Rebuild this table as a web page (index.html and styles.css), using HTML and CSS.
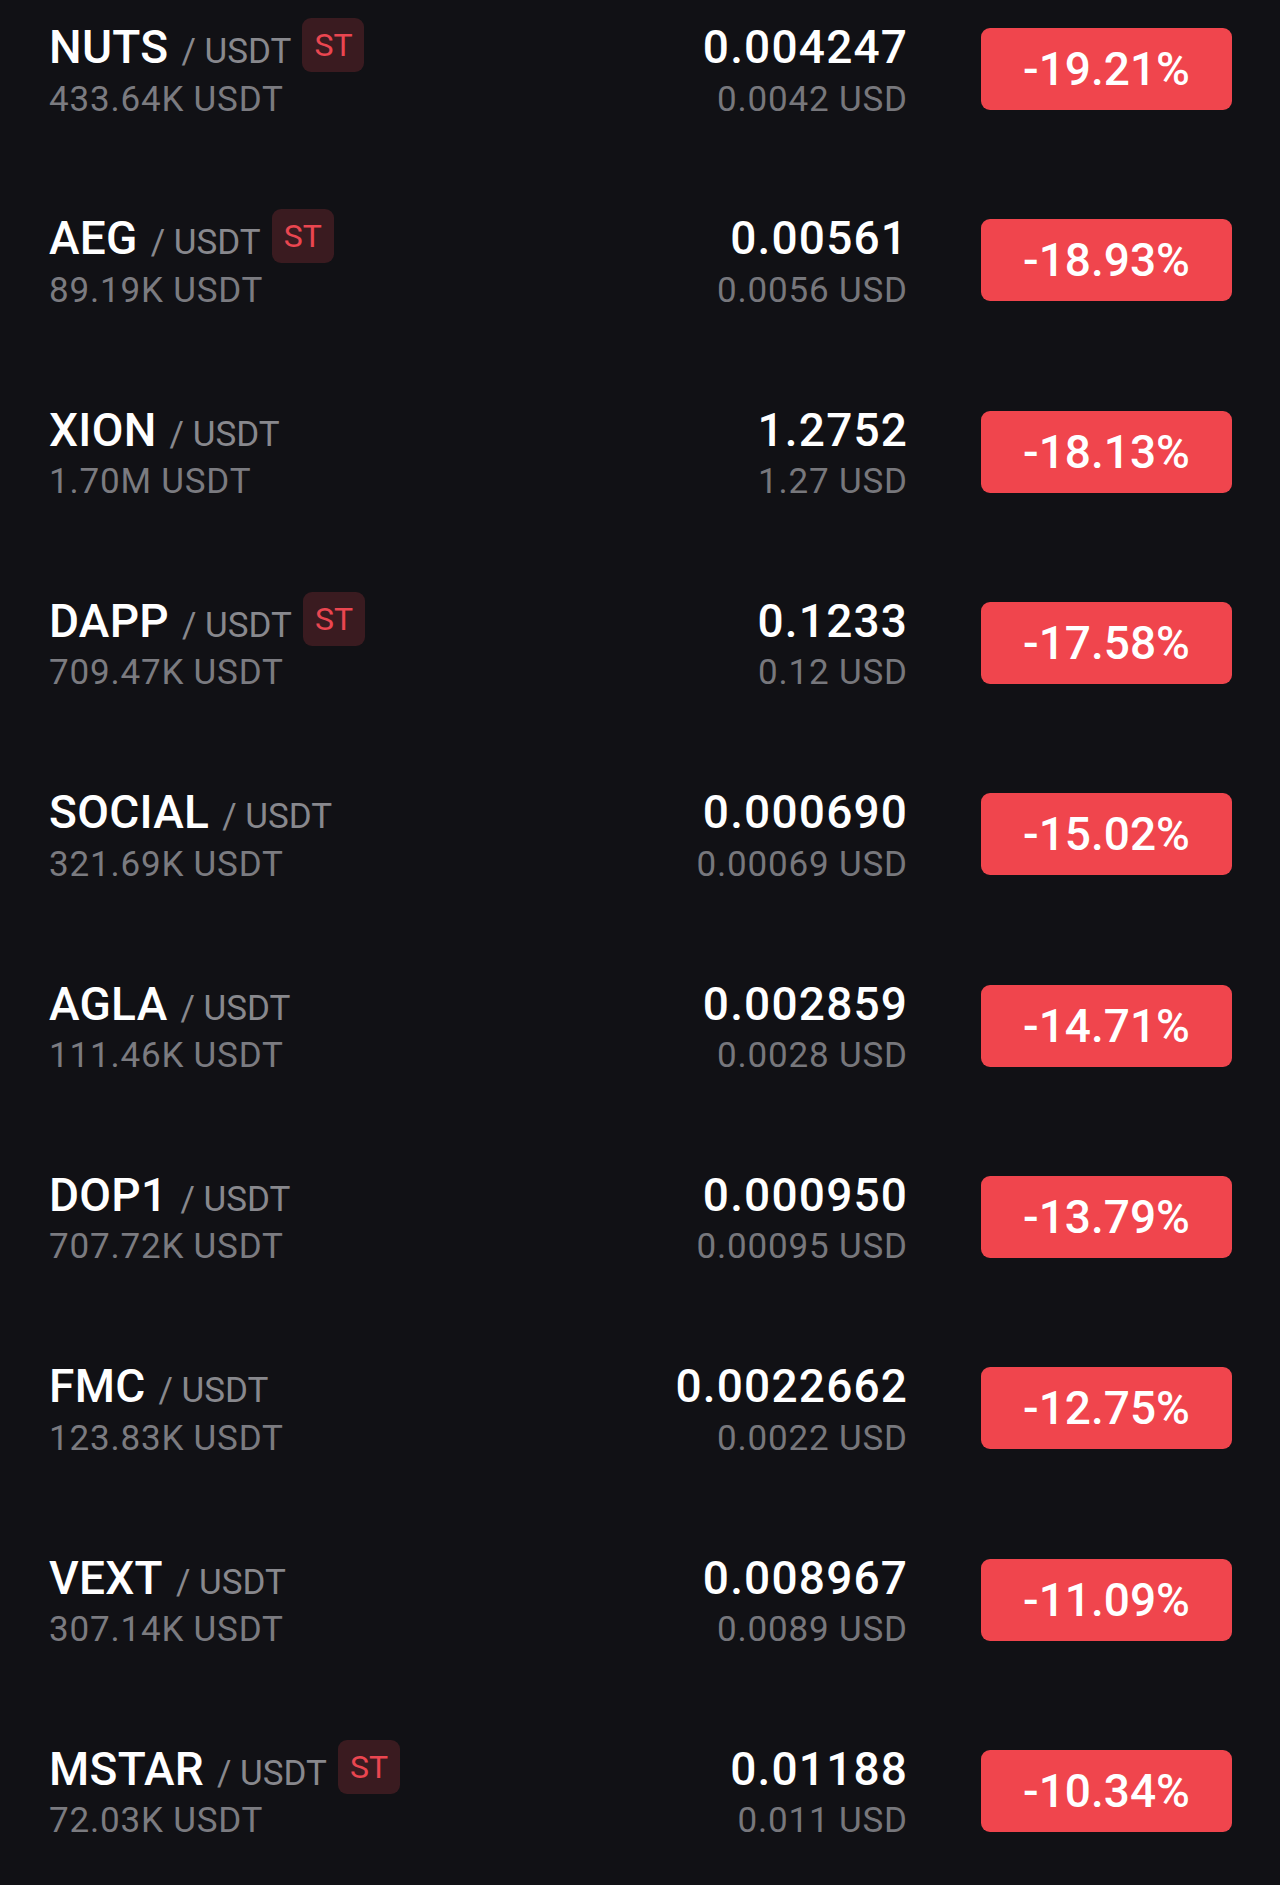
FILE: index.html
```html
<!DOCTYPE html>
<html lang="en">
<head>
<meta charset="utf-8">
<title>Top Losers</title>
<link rel="stylesheet" href="styles.css">
</head>
<body>
<div class="list">
  <div class="row">
    <div class="left">
      <div class="name-line"><span class="name">NUTS</span><span class="pair">/ USDT</span><span class="tag">ST</span></div>
      <div class="vol">433.64K USDT</div>
    </div>
    <div class="price-col">
      <div class="price">0.004247</div>
      <div class="usd">0.0042 USD</div>
    </div>
    <div class="chg">-19.21%</div>
  </div>
  <div class="row">
    <div class="left">
      <div class="name-line"><span class="name">AEG</span><span class="pair">/ USDT</span><span class="tag">ST</span></div>
      <div class="vol">89.19K USDT</div>
    </div>
    <div class="price-col">
      <div class="price">0.00561</div>
      <div class="usd">0.0056 USD</div>
    </div>
    <div class="chg">-18.93%</div>
  </div>
  <div class="row">
    <div class="left">
      <div class="name-line"><span class="name">XION</span><span class="pair">/ USDT</span></div>
      <div class="vol">1.70M USDT</div>
    </div>
    <div class="price-col">
      <div class="price">1.2752</div>
      <div class="usd">1.27 USD</div>
    </div>
    <div class="chg">-18.13%</div>
  </div>
  <div class="row">
    <div class="left">
      <div class="name-line"><span class="name">DAPP</span><span class="pair">/ USDT</span><span class="tag">ST</span></div>
      <div class="vol">709.47K USDT</div>
    </div>
    <div class="price-col">
      <div class="price">0.1233</div>
      <div class="usd">0.12 USD</div>
    </div>
    <div class="chg">-17.58%</div>
  </div>
  <div class="row">
    <div class="left">
      <div class="name-line"><span class="name">SOCIAL</span><span class="pair">/ USDT</span></div>
      <div class="vol">321.69K USDT</div>
    </div>
    <div class="price-col">
      <div class="price">0.000690</div>
      <div class="usd">0.00069 USD</div>
    </div>
    <div class="chg">-15.02%</div>
  </div>
  <div class="row">
    <div class="left">
      <div class="name-line"><span class="name">AGLA</span><span class="pair">/ USDT</span></div>
      <div class="vol">111.46K USDT</div>
    </div>
    <div class="price-col">
      <div class="price">0.002859</div>
      <div class="usd">0.0028 USD</div>
    </div>
    <div class="chg">-14.71%</div>
  </div>
  <div class="row">
    <div class="left">
      <div class="name-line"><span class="name">DOP1</span><span class="pair">/ USDT</span></div>
      <div class="vol">707.72K USDT</div>
    </div>
    <div class="price-col">
      <div class="price">0.000950</div>
      <div class="usd">0.00095 USD</div>
    </div>
    <div class="chg">-13.79%</div>
  </div>
  <div class="row">
    <div class="left">
      <div class="name-line"><span class="name">FMC</span><span class="pair">/ USDT</span></div>
      <div class="vol">123.83K USDT</div>
    </div>
    <div class="price-col">
      <div class="price">0.0022662</div>
      <div class="usd">0.0022 USD</div>
    </div>
    <div class="chg">-12.75%</div>
  </div>
  <div class="row">
    <div class="left">
      <div class="name-line"><span class="name">VEXT</span><span class="pair">/ USDT</span></div>
      <div class="vol">307.14K USDT</div>
    </div>
    <div class="price-col">
      <div class="price">0.008967</div>
      <div class="usd">0.0089 USD</div>
    </div>
    <div class="chg">-11.09%</div>
  </div>
  <div class="row">
    <div class="left">
      <div class="name-line"><span class="name">MSTAR</span><span class="pair">/ USDT</span><span class="tag">ST</span></div>
      <div class="vol">72.03K USDT</div>
    </div>
    <div class="price-col">
      <div class="price">0.01188</div>
      <div class="usd">0.011 USD</div>
    </div>
    <div class="chg">-10.34%</div>
  </div>
</div>
</body>
</html>
```

FILE: styles.css
```css
html, body {
  margin: 0;
  padding: 0;
  background: #111115;
}
body {
  font-family: Roboto, "Noto Sans", sans-serif;
  color: #ffffff;
}
.list {
  height: 1885px;
  overflow: hidden;
}
.row {
  box-sizing: border-box;
  height: 191.33px;
  padding: 24px 48px 0 49px;
  display: flex;
  align-items: flex-start;
}
.left {
  flex: 1;
  display: flex;
  flex-direction: column;
}
.name-line {
  display: flex;
  align-items: baseline;
  height: 46px;
}
.name {
  font-size: 46px;
  line-height: 46px;
  font-weight: 500;
  letter-spacing: 0.3px;
  color: #ffffff;
}
.pair {
  margin-left: 13px;
  font-size: 35px;
  line-height: 46px;
  color: #88888d;
}
.tag {
  align-self: center;
  margin-left: 11px;
  margin-bottom: 4px;
  width: 62px;
  height: 54px;
  border-radius: 9px;
  background: #3a1b20;
  color: #ea4650;
  font-size: 32px;
  line-height: 54px;
  text-align: center;
}
.vol {
  margin-top: 11.5px;
  font-size: 35px;
  line-height: 35px;
  letter-spacing: 0.8px;
  color: #7b7b80;
}
.price-col {
  display: flex;
  flex-direction: column;
  align-items: flex-end;
  margin-right: 74px;
}
.price {
  font-size: 46px;
  line-height: 46px;
  font-weight: 500;
  letter-spacing: 1.2px;
  margin-right: -1.2px;
  color: #ffffff;
}
.usd {
  margin-top: 11.5px;
  font-size: 35px;
  line-height: 35px;
  letter-spacing: 0.8px;
  margin-right: -0.8px;
  color: #77777c;
}
.chg {
  margin-top: 4px;
  width: 251px;
  height: 82px;
  border-radius: 9px;
  background: #f0454d;
  color: #ffffff;
  font-size: 46px;
  font-weight: 500;
  line-height: 82px;
  text-align: center;
}
```
